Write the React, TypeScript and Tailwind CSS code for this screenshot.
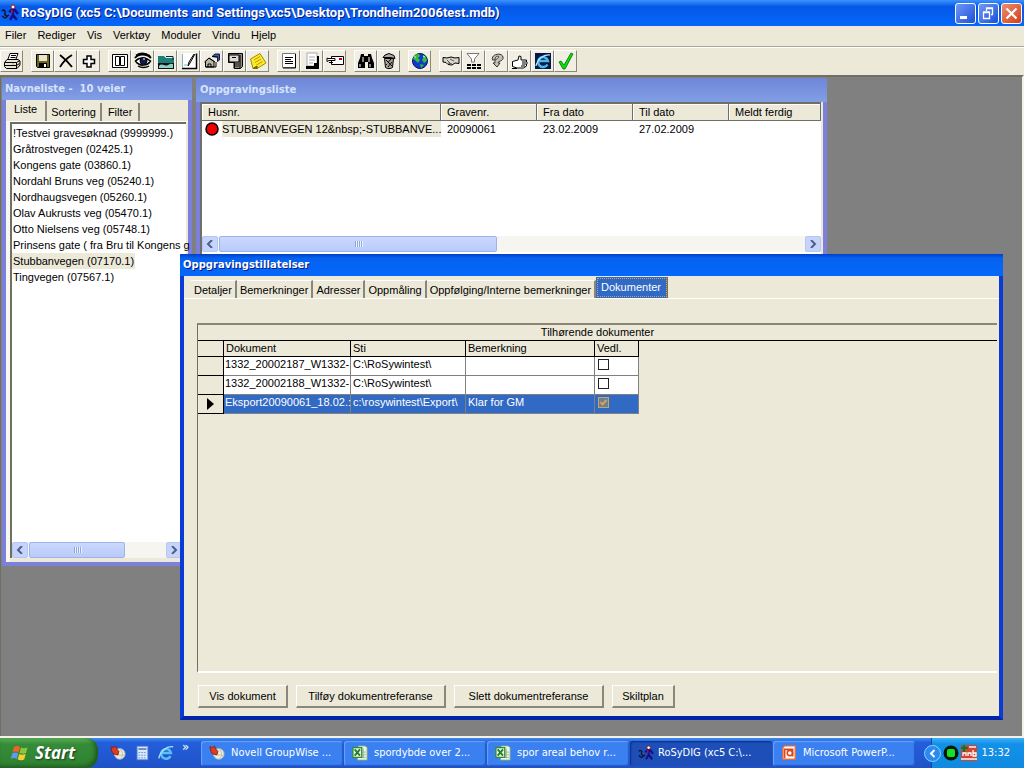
import { useState } from "react";
import type { ReactNode } from "react";

const Icon = ({ children, size = 18 }: { children: ReactNode; size?: number }) => (
  <svg width={size} height={size} viewBox="0 0 18 18" fill="none" stroke="#000" aria-hidden="true">
    {children}
  </svg>
);

const icons: Record<string, ReactNode> = {
  print: (
    <Icon>
      <path d="M5 7 7 1.500h8L13 7" fill="#fff" />
      <path d="M8 3.500h5M7.500 5.500h5" />
      <path d="M1.500 10.500 4 7.500h11l2 1.500v4l-3 3.500H3.500l-2-2z" fill="#e8e6d8" />
      <path d="M2 10.500h11.500L17 8.500M2 13.500h11.500v3M13.500 10.500v3l3-2" />
      <path d="M9 12h2" stroke="#d0b000" />
    </Icon>
  ),
  save: (
    <Icon>
      <path d="M2.500 2.500h13v13h-12l-1-1z" fill="#6b6420" />
      <path d="M5 3h8v6H5z" fill="#e8e4d0" stroke="none" />
      <path d="M5 11h8v5H5z" fill="#000" stroke="none" />
      <path d="M10 12h2v3h-2z" fill="#fff" stroke="none" />
    </Icon>
  ),
  cut: (
    <Icon>
      <path d="M3 3c4 3 8 7 12 12M15 3C10 6 6 10 3 15" strokeWidth="1.800" />
    </Icon>
  ),
  add: (
    <Icon>
      <path d="M7 4h4v3.500h3.500v4H11V15H7v-3.500H3.500v-4H7z" fill="#fff" strokeWidth="1.500" />
    </Icon>
  ),
  book: (
    <Icon>
      <path d="M1.500 2.500h15v13h-15z" fill="#fff" />
      <path d="M4.500 4.500h4v9h-4zM9.500 4.500h4v9h-4zM1.500 15.500h15" />
    </Icon>
  ),
  eye: (
    <Icon>
      <path d="M1 6c3-4 11-5 16 0M2 3.500C7 .5 12 1.500 16 4" strokeWidth="2" />
      <path d="M1.500 9c4-4 10-4 15 0-3 5-11 6-15 0z" fill="#fff" strokeWidth="1.500" />
      <circle cx="9.500" cy="9" r="3.500" fill="#111a50" />
      <path d="M9 7h2" stroke="#fff" />
      <path d="M4 14c3 2 8 2 11 0" strokeWidth="1.500" />
    </Icon>
  ),
  folder: (
    <Icon>
      <path d="M1 4h6l2 2h8v6H1z" fill="#1d7f7a" stroke="none" />
      <path d="M9 4.500h7V8" stroke="#092c2b" />
      <path d="M1 11h16v6H1z" fill="#111" stroke="none" />
      <path d="M2 14c3-4 6 1 9-1s4-1 5-1v4H2z" fill="#8ecfc6" stroke="none" />
    </Icon>
  ),
  edit: (
    <Icon>
      <path d="M2 1h14v15H2z" fill="#fff" stroke="none" />
      <path d="M2 16.500h14.500V1.500" strokeWidth="1.500" />
      <path d="m15 2-5 9-2 3 1-4 5-8" fill="#dfe9ef" />
      <path d="M2.500 2v14M4 13h4" stroke="#8ab2c0" />
    </Icon>
  ),
  house: (
    <Icon>
      <path d="M2.500 9.500 6 6l5 3.500V15H2.500z" fill="#b8b6aa" />
      <path d="M1.500 10 6 6l6 4M5 15v-3h3v3" />
      <path d="M9 4.500 12 2h4.500v6l-2 1.500V5z" fill="#4658a8" stroke="#101845" />
      <path d="M14.500 5 9 4.500M13 10v5H3" />
    </Icon>
  ),
  cabinet: (
    <Icon>
      <path d="M2.500 1.500h14v13l-2 2h-6v-6h-6z" fill="#8f8d84" />
      <path d="M3 3h10v7H3z" fill="#dddbd0" />
      <path d="M6 5.500h4M8 10.500v6M14 3v13" />
      <path d="M9 11h4v4H9z" fill="#55534c" stroke="none" />
    </Icon>
  ),
  note: (
    <Icon>
      <path d="M1.500 7 11 1.500 17 11 8 16.500H4z" fill="#f8ec2c" stroke="#a08b00" />
      <path d="m5 8 6-3.500M6 10.500l6-3.500M7.500 13l6-3.500" stroke="#d08d00" />
      <path d="M4 16.500 8 14v3" fill="#866c00" stroke="#655200" />
    </Icon>
  ),
  page: (
    <Icon>
      <path d="M2.500 1.500h13v14h-13z" fill="#fff" stroke="#777" />
      <path d="M5 5.500h8M5 7.500h6M5 9.500h8M5 11.500h8M15.500 2v14H3" />
    </Icon>
  ),
  scroll: (
    <Icon>
      <path d="M4 1h10v13H4z" fill="#fff" stroke="#aaa" />
      <path d="M6 5h6M6 8h6M6 11h4" stroke="#aaa" />
      <path d="M14 4h2v13H3v-3h8v-3h3z" fill="#000" stroke="none" />
    </Icon>
  ),
  card: (
    <Icon>
      <path d="M5.500 4.500h12v8h-12z" fill="#fff" />
      <path d="M13 6h3v2h-3z" fill="#c80000" stroke="none" />
      <path d="M2 6.500h7v2H3L1 9.500V6z" fill="#fff" />
      <path d="M3 10.500h4" />
    </Icon>
  ),
  find: (
    <Icon>
      <path d="M4 2h3v2h4V2h3l1 4 2 5v5h-6v-6H8v6H1v-5l2-5z" fill="#000" stroke="none" />
      <path d="M6 5v5M12 5v5M3 12v3M13 12v3" stroke="#fff" />
    </Icon>
  ),
  trash: (
    <Icon>
      <path d="M4.500 6.500h9l-1 9c-2 1.500-5 1.500-7 0z" fill="#a5a398" />
      <path d="M3 5.500 5 3l4-1.500 5 2 1 3-5-1z" fill="#aaa" />
      <path d="m6 8 6 6M11 7l-5 6M12 10l-4 5" />
      <path d="M6 11h2" stroke="#ddd" />
    </Icon>
  ),
  globe: (
    <Icon>
      <circle cx="9" cy="9" r="7.500" fill="#1238d0" stroke="#071558" />
      <path d="M4 3c3-2 5-1 5 1L7 6l2 2-2 3-3-3-2-1zM12 3l3 2 1 4-3 2-2-3 1-2zM9 12l4 1-3 3z" fill="#35bd35" stroke="none" />
      <path d="M3 5h2M12 4l2 1" stroke="#bfeaff" />
    </Icon>
  ),
  hands: (
    <Icon>
      <path d="M1 5.500 5 6l4-1 4 1 4-.5v6l-4-.5-3 2-4-.5-2-2-3-.5z" fill="#d8d6c9" />
      <path d="m5 8 3 3M8 7l4 2M6 11l4 1" stroke="#555" />
    </Icon>
  ),
  filter: (
    <Icon>
      <path d="M2 1.500h12L9.500 7v3h-3V7z" fill="#fff" stroke="#777" />
      <path d="M2 12h4v2H2zM7 12h4v2H7zM12 12h4v2h-4zM2 15h4v2H2zM7 15h4v2H7zM12 15h4v2h-4z" fill="#000" stroke="none" />
    </Icon>
  ),
  bend: (
    <Icon>
      <path d="M4.500 8C2.500 2 14 0 15 5c1 4-5 4-5 6h2l-3 4-4-4h2c-1-4 4-5 4-6-2-2-4 0-4 3z" fill="#c3c1b6" stroke="#333" />
    </Icon>
  ),
  thumb: (
    <Icon>
      <path d="M1.500 9.500 7 8l1-4 2 .5V8h5.500v2l1 1-1 1v2l-3 2H6l-4.500-1.500z" fill="#fff" />
      <path d="M11 10h4M11 12h4M10 14h4M1 16.500h5" />
    </Icon>
  ),
  ie: (
    <Icon>
      <path d="M1 1h16v16H1z" fill="#06193f" stroke="none" />
      <path d="M13.500 12.500A5 5 0 1 1 14 9H5" stroke="#4bb8ef" strokeWidth="2.500" />
      <path d="M2 14C3 8 9 2 16 3" stroke="#b9e8ff" strokeWidth="1.200" />
    </Icon>
  ),
  check: (
    <Icon>
      <path d="m2 10 2-1 3 4 7-12 2 1-8 15H6z" fill="#09e009" stroke="#066b06" strokeWidth=".8" />
    </Icon>
  ),
};

const toolbar = [
  ["print"],
  ["save", "cut", "add"],
  ["book", "eye", "folder", "edit", "house", "cabinet", "note"],
  ["page", "scroll", "card"],
  ["find", "trash"],
  ["globe"],
  ["hands", "filter", "bend", "thumb", "ie", "check"],
];

const roads = [
  "!Testvei gravesøknad (9999999.)",
  "Gråtrostvegen (02425.1)",
  "Kongens gate (03860.1)",
  "Nordahl Bruns veg (05240.1)",
  "Nordhaugsvegen (05260.1)",
  "Olav Aukrusts veg (05470.1)",
  "Otto Nielsens veg (05748.1)",
  "Prinsens gate ( fra Bru til Kongens g",
  "Stubbanvegen (07170.1)",
  "Tingvegen (07567.1)",
];

const documents = [
  { name: "1332_20002187_W1332-", path: "C:\\RoSywintest\\", note: "", attached: false },
  { name: "1332_20002188_W1332-", path: "C:\\RoSywintest\\", note: "", attached: false },
  { name: "Eksport20090061_18.02.:", path: "c:\\rosywintest\\Export\\", note: "Klar for GM", attached: true },
];

const RunnerIcon = ({ size = 18 }: { size?: number }) => (
  <Icon size={size}>
    <path d="M1 7c2-2 4 0 3 2s2 4 4 2M1 12l3 2 3-2" stroke="#14142e" strokeWidth="1.500" />
    <circle cx="12" cy="3" r="2" fill="#fff" stroke="#b01010" />
    <path d="m8 8 3-2h3l3 4M12 6v5l-3 5M12 11l4 5" stroke="#15108a" strokeWidth="2.500" />
    <path d="M11 6v3" stroke="#c01818" strokeWidth="1.500" />
  </Icon>
);

const GroupWiseIcon = () => (
  <Icon size={16}>
    <circle cx="11" cy="10" r="6" fill="#e6ebe6" stroke="#a9b8b0" />
    <path d="M11 5c4 1 4 8 1 10M7 12c3-1 6-1 9 0" stroke="#c8bc94" />
    <path d="m1 2 3 1 2-2 2 4 2 2-1 4-5-1-2-3z" fill="#e43a20" stroke="#86200f" />
  </Icon>
);

const ExcelIcon = () => (
  <Icon size={16}>
    <path d="M7 1h8l2 2v14H6z" fill="#eef6e9" stroke="#7ea878" />
    <path d="M10 8h6M10 11h6M10 14h6M13 4v11" stroke="#9cb998" />
    <path d="M1 3h10v11H1z" fill="#e9f5e5" stroke="#2f8b32" strokeWidth="1.500" />
    <path d="m3 5 6 7M9 5l-6 7" stroke="#217b28" strokeWidth="2" />
  </Icon>
);

const PowerPointIcon = () => (
  <Icon size={16}>
    <path d="M4 1h12v15H2V3z" fill="#fff" stroke="#e66a3c" strokeWidth="1.500" />
    <path d="M4 15V5h9v8" stroke="#d9481c" strokeWidth="2" />
    <circle cx="10" cy="9" r="3" stroke="#d9481c" strokeWidth="1.800" />
  </Icon>
);

const tasks = [
  { label: "Novell GroupWise ...", icon: <GroupWiseIcon /> },
  { label: "spordybde over 2...", icon: <ExcelIcon /> },
  { label: "spor areal behov r...", icon: <ExcelIcon /> },
  { label: "RoSyDIG (xc5 C:\\...", icon: <RunnerIcon size={16} />, active: true },
  { label: "Microsoft PowerP...", icon: <PowerPointIcon /> },
];

const ScrollBar = ({ thumb }: { thumb: string }) => (
  <div className="flex h-4 shrink-0 gap-px bg-[#f6f5f0]">
    <button aria-label="Scroll left" className="grid w-4 place-items-center rounded-xs border border-[#b4c6f4] bg-[#c6d4fd]">
      <svg width="8" height="8" viewBox="0 0 8 8" fill="none" stroke="#4d6185" strokeWidth="2" aria-hidden="true">
        <path d="M6 0 2 4l4 4" />
      </svg>
    </button>
    <div className={"flex items-center justify-center gap-px rounded-xs border border-[#9db4ea] bg-linear-to-b from-[#cbd8fe] to-[#b9cbf9] " + thumb}>
      {[0, 1, 2, 3].map((i) => (
        <i key={i} className="h-[6px] w-px bg-[#8ea6e0] shadow-[1px_0_0_#eef4fe]"></i>
      ))}
    </div>
    <button aria-label="Scroll right" className="ml-auto grid w-4 place-items-center rounded-xs border border-[#b4c6f4] bg-[#c6d4fd]">
      <svg width="8" height="8" viewBox="0 0 8 8" fill="none" stroke="#4d6185" strokeWidth="2" aria-hidden="true">
        <path d="m2 0 4 4-4 4" />
      </svg>
    </button>
  </div>
);

const TitleBar = () => (
  <header className="flex h-[26px] shrink-0 items-center gap-[2px] bg-linear-to-b from-[#3a93ff] via-[#0558e6] via-25% to-[#0468fb] pr-[2px] pl-px">
    <RunnerIcon />
    <h1 className="font-[Roboto,sans-serif] text-[13px] font-bold whitespace-nowrap text-white [text-shadow:1px_1px_#0a1883]">
      RoSyDIG (xc5 C:\Documents and Settings\xc5\Desktop\Trondheim2006test.mdb)
    </h1>
    <div className="ml-auto flex gap-[2px]">
      <button aria-label="Minimize" className="h-[21px] w-[21px] rounded-[3px] border border-white bg-linear-to-br from-[#6f97f5] to-[#1a4fd8]">
        <svg width="19" height="19" viewBox="0 0 19 19" aria-hidden="true">
          <path d="M4 12h7v3H4z" fill="#fff" />
        </svg>
      </button>
      <button aria-label="Restore" className="h-[21px] w-[21px] rounded-[3px] border border-white bg-linear-to-br from-[#6f97f5] to-[#1a4fd8]">
        <svg width="19" height="19" viewBox="0 0 19 19" fill="none" stroke="#fff" aria-hidden="true">
          <path d="M4.500 8.500h6v6h-6zM4 8h7M7.500 7V4.500h6v6H12M7 4h7" strokeWidth="1.300" />
        </svg>
      </button>
      <button aria-label="Close" className="h-[21px] w-[21px] rounded-[3px] border border-white bg-linear-to-br from-[#f08a6c] to-[#d03c14]">
        <svg width="19" height="19" viewBox="0 0 19 19" stroke="#fff" strokeWidth="2.200" aria-hidden="true">
          <path d="m4.500 4.500 10 10M14.500 4.500l-10 10" />
        </svg>
      </button>
    </div>
  </header>
);

const MenuBar = () => (
  <nav className="flex h-[21px] shrink-0 items-center gap-[11px] border-b border-[#aca899] px-[5px] pb-[3px]">
    {["Filer", "Rediger", "Vis", "Verktøy", "Moduler", "Vindu", "Hjelp"].map((item) => (
      <button key={item}>{item}</button>
    ))}
  </nav>
);

const ToolBar = () => (
  <div className="flex h-[28px] shrink-0 items-start gap-2 border-t border-white pt-[2px]">
    {toolbar.map((group, i) => (
      <div key={i} className="flex">
        {group.map((name) => (
          <button
            key={name}
            aria-label={name}
            className="grid h-[22px] w-[23px] place-items-center border border-t-white border-r-[#8a877a] border-b-[#8a877a] border-l-white bg-[#f1efe3]"
          >
            {icons[name]}
          </button>
        ))}
      </div>
    ))}
  </div>
);

const NameList = () => {
  const [selected, setSelected] = useState(8);

  return (
    <section className="absolute top-px left-px flex h-[488px] w-[190px] flex-col border-4 border-t-0 border-[#7a80dc] bg-[#ece9d8]">
      <h2 className="-mx-1 flex h-[22px] shrink-0 items-center bg-linear-to-b from-[#6e86d8] to-[#819fe6] px-[3px] font-[DejaVu_Sans,sans-serif] text-[10px] font-bold whitespace-pre text-[#d5e2fa]">
        {"Navneliste -  10 veier"}
      </h2>
      <div role="tablist" className="flex h-[21px] shrink-0 items-end pt-px">
        <button role="tab" className="h-5 border-r-2 border-[#8a877a] px-2 pb-1">Liste</button>
        <button role="tab" className="h-[18px] border-r-2 border-[#8a877a] px-1">Sortering</button>
        <button role="tab" className="h-[18px] border-r-2 border-[#8a877a] px-[6px]">Filter</button>
      </div>
      <div className="flex min-h-0 grow flex-col border-t border-l-4 border-white border-l-[#f8f7f0] pr-[2px] pb-1">
        <div className="flex grow flex-col border-t-2 border-l-2 border-[#716f64] bg-white">
          <ul className="grow pt-px">
            {roads.map((road, i) => (
              <li key={road} className="h-4">
                <button
                  onClick={() => setSelected(i)}
                  className={i === selected ? "block h-4 bg-[#ece9d8] px-px whitespace-nowrap" : "block h-4 px-px whitespace-nowrap"}
                >
                  {road}
                </button>
              </li>
            ))}
          </ul>
          <div className="pr-1">
            <ScrollBar thumb="w-[96px]" />
          </div>
        </div>
      </div>
    </section>
  );
};

const DigList = () => (
  <section className="absolute top-px left-[195px] flex h-[180px] w-[631px] flex-col border-4 border-t-0 border-b-0 border-[#7a80dc] bg-[#ece9d8]">
    <h2 className="-mx-1 flex h-[24px] shrink-0 items-center bg-linear-to-b from-[#6e86d8] to-[#819fe6] px-1 font-[DejaVu_Sans,sans-serif] text-[10px] font-bold text-[#d5e2fa]">
      Oppgravingsliste
    </h2>
    <div className="mr-[2px] flex min-h-0 grow flex-col border-t-2 border-l-2 border-[#716f64] bg-white">
      <table className="w-full table-fixed border-separate border-spacing-0 text-left">
        <thead>
          <tr className="h-[17px]">
            {[
              ["Husnr.", "w-[239px]"],
              ["Gravenr.", "w-[96px]"],
              ["Fra dato", "w-[96px]"],
              ["Til dato", "w-[96px]"],
              ["Meldt ferdig", ""],
            ].map(([label, width]) => (
              <th key={label} className={"border-r border-b border-[#716f64] bg-[#ece9d8] p-0 pl-[6px] font-normal shadow-[inset_1px_1px_#fff] " + width}>
                {label}
              </th>
            ))}
          </tr>
        </thead>
        <tbody>
          <tr className="h-4">
            <td className="p-0">
              <div className="flex h-4 items-center gap-[2px] pl-[2px]">
                <svg width="16" height="16" viewBox="0 0 16 16" className="shrink-0" aria-hidden="true">
                  <circle cx="8" cy="8" r="6" fill="#f00000" stroke="#000" strokeWidth="1.500" />
                </svg>
                <span className="h-4 grow bg-[#ece9d8] whitespace-nowrap">{"STUBBANVEGEN 12&nbsp;-STUBBANVE..."}</span>
              </div>
            </td>
            <td className="p-0 pl-[6px]">20090061</td>
            <td className="p-0 pl-[6px]">23.02.2009</td>
            <td className="p-0 pl-[6px]">27.02.2009</td>
            <td></td>
          </tr>
        </tbody>
      </table>
      <div className="mt-auto mb-[6px]">
        <ScrollBar thumb="w-[278px]" />
      </div>
    </div>
  </section>
);

const PermitWindow = () => {
  const [tab, setTab] = useState("Dokumenter");
  const [docs, setDocs] = useState(documents);

  const toggle = (index: number) =>
    setDocs(docs.map((doc, i) => (i === index ? { ...doc, attached: !doc.attached } : doc)));

  return (
    <section className="absolute top-[177px] right-[19px] bottom-[16px] left-[179px] flex flex-col border-4 border-t-0 border-[#0a3bd6] border-b-[#0424a8] bg-[#ece9d8]">
      <h2 className="-mx-1 flex h-[22px] shrink-0 items-center bg-linear-to-b from-[#0440c8] via-[#0562f0] via-20% to-[#0468fb] px-[3px] font-[DejaVu_Sans,sans-serif] text-[10px] font-bold text-white [text-shadow:1px_1px_#0a1883]">
        Oppgravingstillatelser
      </h2>
      <div role="tablist" className="flex h-[23px] shrink-0 items-end border-b border-white pl-[7px]">
        {["Detaljer", "Bemerkninger", "Adresser", "Oppmåling", "Oppfølging/Interne bemerkninger", "Dokumenter"].map((name) => (
          <button
            key={name}
            role="tab"
            aria-selected={name === tab}
            onClick={() => setTab(name)}
            className={
              name === tab
                ? "h-[21px] border-r-2 border-[#716f64] bg-[#316ac5] px-[5px] pb-[2px] text-white outline-1 -outline-offset-2 outline-dotted outline-[#c9a070]"
                : "h-[18px] border-t border-r-2 border-t-white border-r-[#8a877a] px-[3px]"
            }
          >
            {name}
          </button>
        ))}
      </div>
      <div className="mt-[24px] mr-[2px] ml-[13px] flex min-h-0 grow flex-col border-t-2 border-b-2 border-l border-t-[#8a877a] border-b-white border-l-[#716f64]">
        <h3 className="h-4 shrink-0 border-b border-black text-center leading-[15px]">Tilhørende dokumenter</h3>
        <table className="w-[441px] table-fixed border-separate border-spacing-0 text-left">
          <thead>
            <tr className="h-4 leading-[15px]">
              <th className="w-[26px] border-r border-b border-black p-0"></th>
              <th className="w-[127px] border-r border-b border-black p-0 pl-[2px] font-normal">Dokument</th>
              <th className="w-[115px] border-r border-b border-black p-0 pl-[2px] font-normal">Sti</th>
              <th className="w-[129px] border-r border-b border-black p-0 pl-[2px] font-normal">Bemerkning</th>
              <th className="border-r border-b border-black p-0 pl-[2px] font-normal">Vedl.</th>
            </tr>
          </thead>
          <tbody>
            {docs.map((doc, i) => (
              <tr key={doc.name} className={i === 2 ? "h-[19px] bg-[#316ac5] leading-[14px] text-white" : "h-[19px] bg-white leading-[14px]"}>
                <td className="border-r border-b border-black bg-[#ece9d8] p-0">
                  {i === 2 && (
                    <svg width="7" height="12" viewBox="0 0 7 12" className="mx-auto" aria-hidden="true">
                      <path d="m0 0 7 6-7 6z" />
                    </svg>
                  )}
                </td>
                <td className="border-r border-b border-[#808080] p-0 pb-1 pl-px whitespace-nowrap">{doc.name}</td>
                <td className="border-r border-b border-[#808080] p-0 pb-1 pl-[2px] whitespace-nowrap">{doc.path}</td>
                <td className="border-r border-b border-[#808080] p-0 pb-1 pl-[2px]">{doc.note}</td>
                <td className="border-r border-b border-[#808080] p-0 pb-1 pl-[3px]">
                  <label className="grid h-[11px] w-[11px]">
                    <input
                      type="checkbox"
                      aria-label={"Vedl. " + doc.name}
                      checked={doc.attached}
                      onChange={() => toggle(i)}
                      className="peer col-start-1 row-start-1 appearance-none border border-[#222] bg-white checked:border-[#c9a65c] checked:bg-[#6a7f9e]"
                    />
                    <svg viewBox="0 0 11 11" fill="none" stroke="#e0a050" strokeWidth="2" className="pointer-events-none invisible col-start-1 row-start-1 peer-checked:visible" aria-hidden="true">
                      <path d="m2.500 5 2 2.500L8.500 3" />
                    </svg>
                  </label>
                </td>
              </tr>
            ))}
          </tbody>
        </table>
      </div>
      <div className="flex shrink-0 gap-2 pt-3 pb-2 pl-[14px]">
        {[
          ["Vis dokument", "w-[90px]"],
          ["Tilføy dokumentreferanse", "w-[150px]"],
          ["Slett dokumentreferanse", "w-[150px]"],
          ["Skiltplan", "w-[63px]"],
        ].map(([label, width]) => (
          <button key={label} className={"h-[23px] border border-r-2 border-b-2 border-t-white border-r-[#8a877a] border-b-[#8a877a] border-l-white " + width}>
            {label}
          </button>
        ))}
      </div>
    </section>
  );
};

const TaskBar = () => (
  <footer className="flex h-[32px] shrink-0 items-stretch border-t-2 border-[#f4f2e6] bg-linear-to-b from-[#3f8cf0] via-[#245edb] via-15% to-[#1f52c8] font-[DejaVu_Sans_Condensed,DejaVu_Sans,sans-serif] text-white">
    <button className="flex w-[98px] shrink-0 items-center gap-[6px] rounded-r-xl bg-linear-to-b from-[#5cb05c] via-[#358c37] via-20% to-[#2f8230] pl-[11px] font-[Open_Sans,sans-serif] text-[17px] font-bold italic shadow-[inset_-3px_-2px_4px_#1d5a20] [text-shadow:1px_1px_2px_#1a3a1a]">
      <svg width="18" height="18" viewBox="0 0 18 18" aria-hidden="true">
        <path d="M3 3c2-1.500 4-1.500 6 0L7.500 8.500c-2-1.500-4-1.500-6 0z" fill="#f0612c" />
        <path d="M10 3.500c2 1 4 1 6.500 0L15 9c-2 1-4 1-6.500 0z" fill="#8cc63f" />
        <path d="M1.200 9.500c2-1.500 4-1.500 6 0L5.700 15c-2-1.500-4-1.500-6 0z" fill="#5b9bf0" />
        <path d="M8.200 10c2 1 4 1 6.500 0l-1.500 5.500c-2 1-4 1-6.500 0z" fill="#fccb33" />
      </svg>
      Start
    </button>
    <div className="flex w-[103px] shrink-0 items-center gap-2 pl-3">
      <button aria-label="GroupWise"><GroupWiseIcon /></button>
      <button aria-label="Kalkulator">
        <Icon size={16}>
          <path d="M3.500 1.500h12v15h-12z" fill="#dce9fb" stroke="#6d93d8" />
          <path d="M5 4.500h9" stroke="#5a83c8" strokeWidth="2" />
          <path d="M5 8.500h9M5 11.500h9M5 14.500h9" stroke="#6890d0" strokeDasharray="2 1" />
        </Icon>
      </button>
      <button aria-label="Internet Explorer">
        <Icon size={16}>
          <path d="M14 12.500A5.500 5.500 0 1 1 14.500 9H5" stroke="#58c0f5" strokeWidth="2.800" />
          <path d="M1 15C2 8 9 1 17 2" stroke="#a8e0ff" strokeWidth="1.500" />
        </Icon>
      </button>
      <span className="-mt-3 text-[13px]">»</span>
    </div>
    <div className="flex min-w-0 grow items-center gap-px">
      {tasks.map((task) => (
        <button
          key={task.label}
          className={
            task.active
              ? "flex h-[25px] w-[142px] items-center gap-1 rounded-[3px] bg-[#1e4fb8] pl-2 whitespace-nowrap shadow-[inset_1px_1px_2px_#0d2f80]"
              : "flex h-[25px] w-[142px] items-center gap-[6px] rounded-[3px] bg-[#3a80f0] pl-2 whitespace-nowrap shadow-[inset_1px_1px_1px_#6aa4fa,inset_-1px_-1px_1px_#2459c8]"
          }
        >
          {task.icon}
          {task.label}
        </button>
      ))}
    </div>
    <div className="flex w-[93px] shrink-0 items-center gap-[2px] border-l border-[#0d4ab0] bg-linear-to-b from-[#3ab0f8] via-[#1290e8] via-20% to-[#108ae0]">
      <button aria-label="Vis skjulte ikoner" className="-ml-2 grid h-[17px] w-[17px] place-items-center rounded-full border border-[#8fd0ff] bg-[#2a8af0]">
        <svg width="9" height="9" viewBox="0 0 9 9" fill="none" stroke="#fff" strokeWidth="2" aria-hidden="true">
          <path d="M6.500 1 3 4.500 6.500 8" />
        </svg>
      </button>
      <svg width="16" height="16" viewBox="0 0 16 16" aria-hidden="true">
        <circle cx="8" cy="8" r="7.500" fill="#001a00" />
        <rect x="4" y="4" width="8" height="8" rx="2" fill="#18e028" />
      </svg>
      <svg width="16" height="16" viewBox="0 0 16 16" fill="none" aria-hidden="true">
        <path d="M0 0h16v16H0z" fill="#cf4434" />
        <path d="M3 0v7M0 3h7" stroke="#0a7a20" strokeWidth="2" />
        <path d="M8 2h7M0 14h16" stroke="#f4c8b8" strokeWidth="2" />
        <path d="M2 11V8h3v3M7 11V8h3v3M12 5v6h3V8h-3" stroke="#fff" strokeWidth="1.300" />
      </svg>
      <time className="ml-auto pr-[14px]">13:32</time>
    </div>
  </footer>
);

const App = () => {
  return (
    <div className="flex h-screen min-h-[500px] flex-col overflow-hidden bg-[#ece9d8] font-[Liberation_Sans,sans-serif] text-[11px] leading-4 text-black">
      <TitleBar />
      <MenuBar />
      <ToolBar />
      <main className="relative min-h-0 grow overflow-hidden border-t-2 border-r-2 border-l border-t-[#716f64] border-r-[#f4f2e6] border-l-[#716f64] bg-[#808080]">
        <NameList />
        <DigList />
        <PermitWindow />
      </main>
      <TaskBar />
    </div>
  );
};

export default App;
